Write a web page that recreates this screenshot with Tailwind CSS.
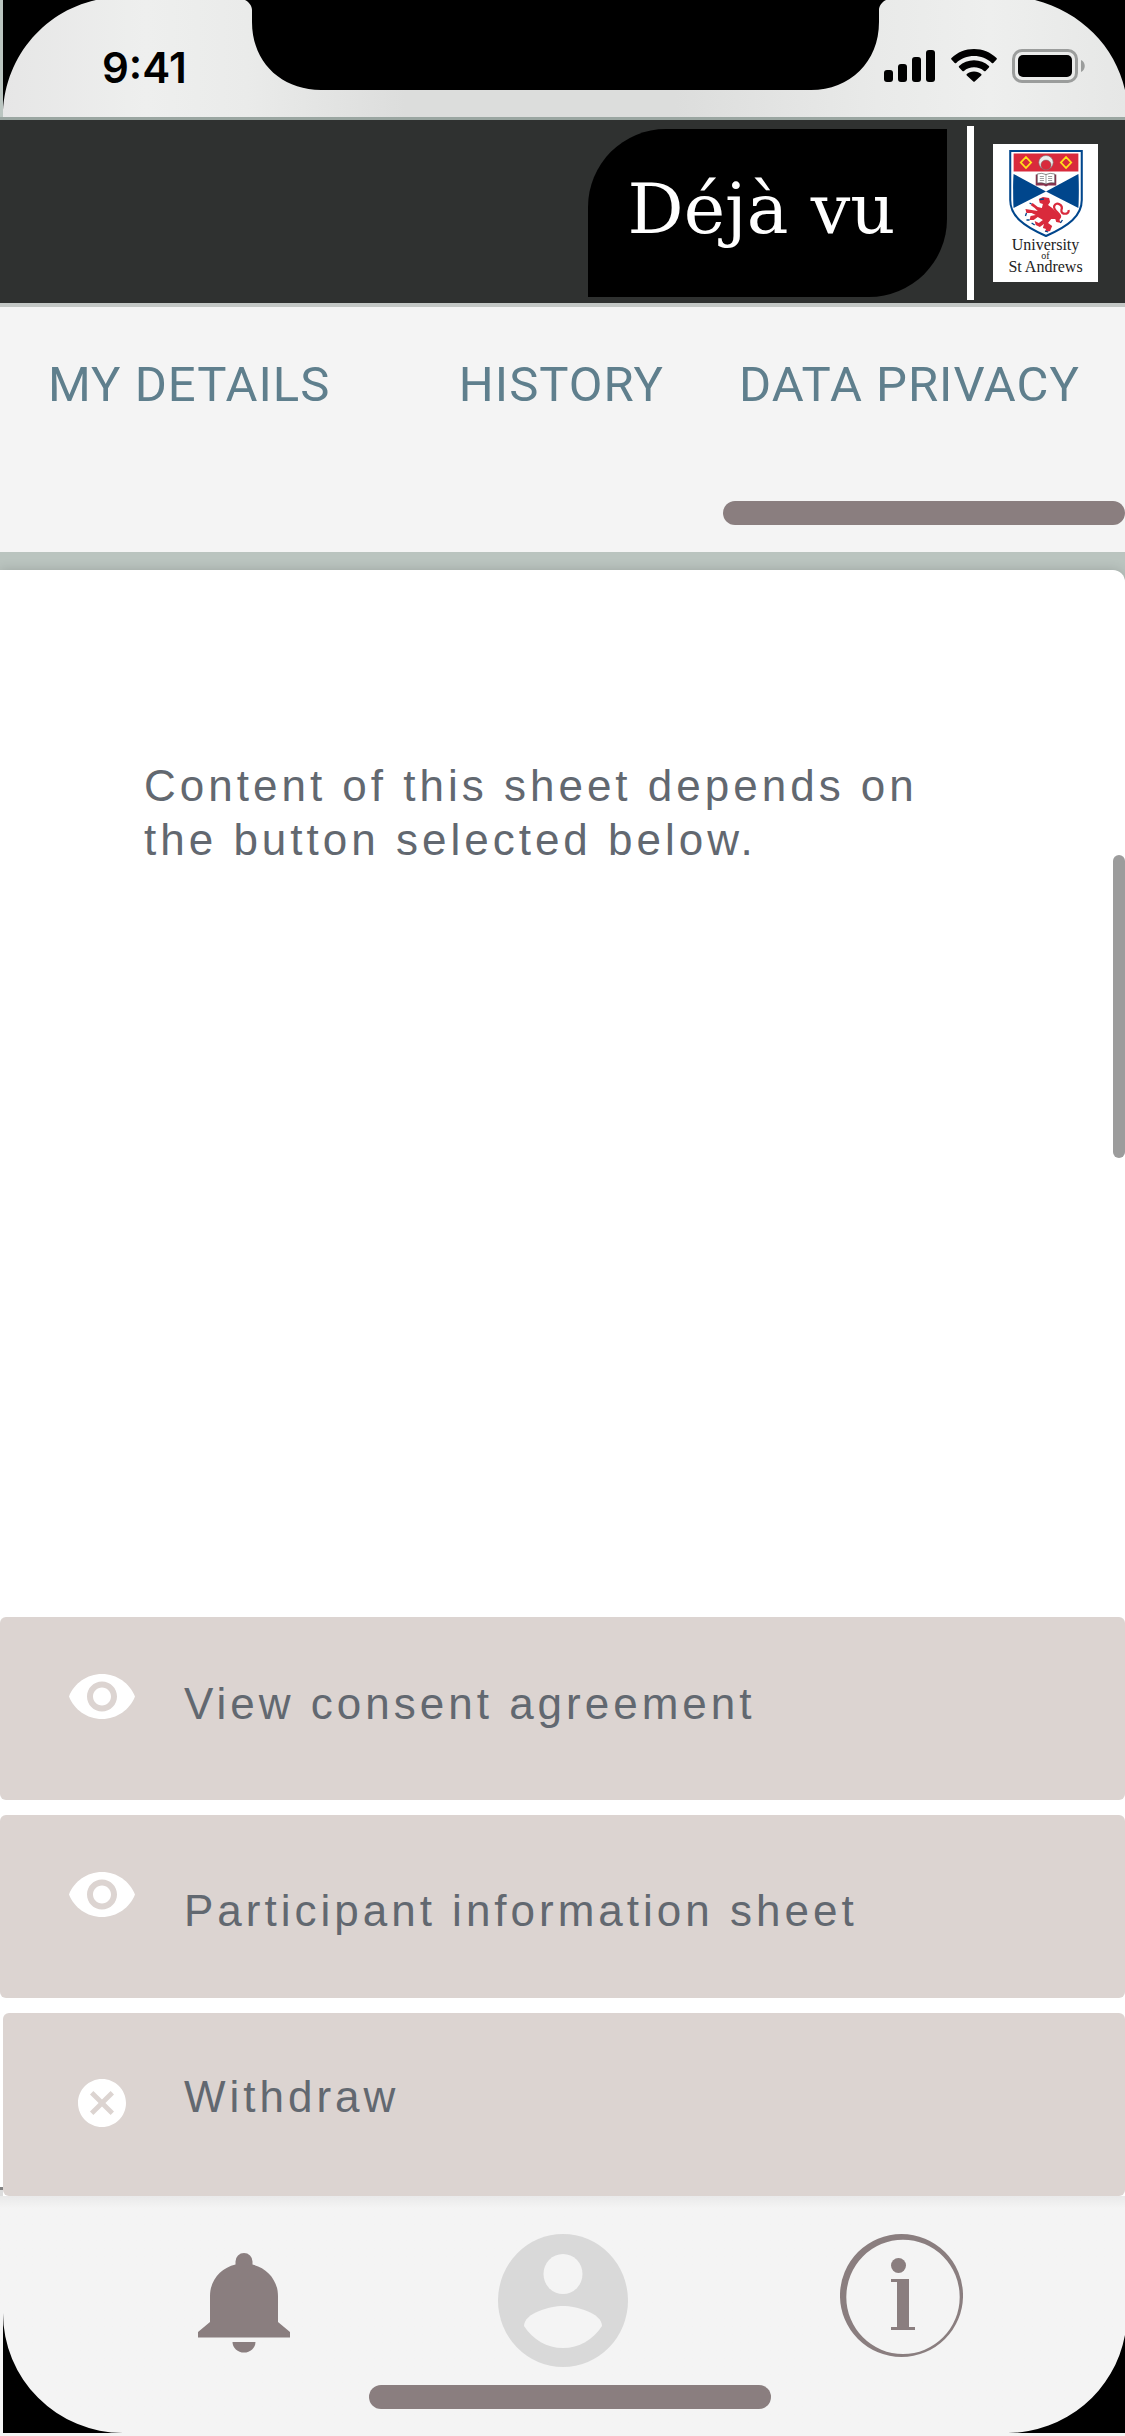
<!DOCTYPE html>
<html lang="en">
<head>
<meta charset="utf-8">
<meta name="viewport" content="width=device-width, initial-scale=1">
<title>Déjà vu – Data privacy</title>
<script src="https://cdn.jsdelivr.net/npm/@tailwindcss/browser@4"></script>
</head>
<body class="relative flex min-h-screen flex-col bg-[#f4f4f4] font-['Liberation_Sans',sans-serif]">

  <!-- Status bar with notch -->
  <div class="relative flex h-[120px] shrink-0 items-start justify-between overflow-hidden border-b-3 border-[#9aa6a1] bg-[linear-gradient(to_right,#e6e6e6_0%,#eeefee_13%,#eaebea_22%,#dcdddc_36%,#dcdddc_60%,#e9eae9_78%,#eeefee_88%,#e6e7e6_100%)]">
    <svg class="absolute top-0 left-0" width="123" height="117" viewBox="0 0 123 117" aria-hidden="true"><path d="M3 0H96C42 12 3 60 3 117z"/><path d="M0 0h3v117H0z" fill="#bac5c0"/></svg>
    <svg class="absolute top-0 right-0" width="90" height="90" viewBox="0 0 90 90" aria-hidden="true"><path d="M0 0H90V90C80 46 46 12 0 0z"/></svg>
    <svg class="absolute top-0 left-[245px]" width="641" height="90" viewBox="0 0 641 90" aria-hidden="true"><path d="M0 0C4 2 7 6 7 10V22C7 62 36 90 76 90H566C605 90 634 62 634 22V10C634 6 637 2 641 0z"/></svg>
    <time class="relative mt-[42px] ml-[102px] font-['Inter',sans-serif] text-[42px] leading-[52px] font-semibold text-black">9:41</time>
    <div class="relative mt-[49px] mr-[39px] flex gap-[15px]">
      <svg width="52" height="34" viewBox="0 0 52 34" role="img" aria-label="Signal"><rect y="21" width="9" height="12" rx="3"/><rect x="14" y="15" width="9" height="18" rx="3"/><rect x="28" y="8" width="9" height="25" rx="3"/><rect x="42" y="1" width="9" height="32" rx="3"/></svg>
      <svg width="46" height="34" viewBox="0 0 46 34" role="img" aria-label="Wi-Fi"><path d="M23 0C31.500 0 39.500 3.200 45.500 9Q46.200 9.700 45.500 10.500L42.300 13.900Q41.500 14.600 40.800 13.900C36 9.400 29.700 7 23 7S10 9.400 5.200 13.900Q4.500 14.600 3.700 13.900L.5 10.500Q-.2 9.700 .5 9C6.500 3.200 14.500 0 23 0z"/><path d="M23 11.200C28.700 11.200 34 13.300 37.900 17Q38.700 17.800 37.900 18.600L34.600 21.900Q33.800 22.600 33 21.900C30.300 19.500 26.800 18.200 23 18.200S15.700 19.500 13 21.900Q12.200 22.600 11.400 21.900L8.100 18.600Q7.300 17.800 8.100 17C12 13.300 17.300 11.200 23 11.200z"/><path d="M23 22.500C26 22.500 28.500 23.500 30.200 25Q31 25.700 30.200 26.500L23.700 32.500Q23 33.100 22.300 32.500L15.800 26.500Q15 25.700 15.800 25C17.500 23.500 20 22.500 23 22.500z"/></svg>
      <svg width="74" height="34" viewBox="0 0 74 34" role="img" aria-label="Battery"><rect x="1.500" y="1.500" width="63" height="31" rx="8.500" fill="none" stroke="#9b9d9c" stroke-width="3"/><rect x="6" y="6" width="54" height="22" rx="5"/><path d="M69 11C74 13 74 21 69 23z" fill="#9b9d9c"/></svg>
    </div>
  </div>

  <!-- Brand bar -->
  <header class="flex h-[187px] shrink-0 items-start justify-end border-b-4 border-[#c3c7c5] bg-[#2f3130] pr-[27px]">
    <div class="mt-[9px] flex h-[168px] w-[359px] items-center justify-center rounded-tl-[78px] rounded-br-[78px] bg-black pr-3 pb-2 font-['DejaVu_Serif',serif] text-[70px] leading-[80px] text-white">Déjà vu</div>
    <div class="mt-[6px] ml-5 h-[174px] w-[7px] bg-white"></div>
    <div class="mt-6 ml-[19px] flex h-[138px] w-[105px] flex-col items-center bg-white pt-[6px] font-['Liberation_Serif',serif] text-[#222]">
      <svg class="shrink-0" width="74" height="87" viewBox="0 0 72 87" preserveAspectRatio="none" aria-hidden="true">
        <path d="M1.200 1H70.800V50C70.800 66 58 76 36 86C14 76 1.200 66 1.200 50z" fill="#fff" stroke="#00468c" stroke-width="2"/>
        <path d="M4.500 3.500H67.500V21.500H4.500z" fill="#d92a3c"/>
        <path d="M4.500 24L36 41.500L4.500 58C4 54 3.800 30 4.500 24zM67.500 24L36 41.500L67.500 58C68 54 68.200 30 67.500 24z" fill="#00468c"/>
        <path d="M16.500 7L21.500 12.500L16.500 18L11.500 12.500zM55.500 7L60.500 12.500L55.500 18L50.500 12.500z" fill="none" stroke="#ffe11a" stroke-width="1.800"/>
        <circle cx="36" cy="12.500" r="7" fill="#eee" stroke="#777" stroke-width=".6"/>
        <circle cx="36" cy="15" r="5" fill="#d92a3c" stroke="#777" stroke-width=".5"/>
        <path d="M26 24.500H46V35.500H38L36 36.500L34 35.500H26z" fill="#8c3450"/>
        <path d="M27.500 24Q32 22.500 36 24.500Q40 22.500 44.500 24V33Q40 32 36 34Q32 32 27.500 33z" fill="#fff" stroke="#444" stroke-width=".6"/>
        <path d="M30 26.500h4M30 28.500h4M30 30.500h4M38 26.500h4M38 28.500h4M38 30.500h4M36 24.500V34" stroke="#777" stroke-width=".7"/>
        <path d="M29 49L33 47L39 48L40 52L38 55L42 58L46 62L50 66L49 70L51 73L46 72L45 69L41 69L38 73L42 76L40 81L35 82L36 79L33 78L34 74L30 77L26 75L25 71L29 73L33 70L28 67L24 70L20 70L21 66L26 65L22 63L17 63L16 59L22 60L28 61L25 58L21 55L23 53L28 57L32 58L33 54L30 53z" fill="#d92a3c"/>
        <path d="M48 69C54 65 42 61 44 56C46 51 53 55 51 60C50 65 59 65 58 60" fill="none" stroke="#d92a3c" stroke-width="2.200"/>
        <path d="M30 49.500L34 49M17 63L16 66M20 70L17 70M25 75L22 73M35 81L38 82M50 73L52 70M22 54L20 53" stroke="#00468c" stroke-width="1.300"/>
      </svg>
      <span class="text-base leading-4">University</span>
      <span class="text-[10px] leading-[6px]">of</span>
      <span class="text-base leading-4">St Andrews</span>
    </div>
  </header>

  <!-- Tabs -->
  <div role="tablist" class="flex h-[245px] shrink-0 font-['Roboto',sans-serif] text-[49px] leading-[56px] tracking-[1px] whitespace-nowrap text-[#5f7f8d]">
    <button role="tab" aria-selected="false" class="flex flex-1 items-start pt-[50px] pl-12">MY DETAILS</button>
    <button role="tab" aria-selected="false" class="flex flex-1 items-start justify-end pt-[50px] pr-[59px]">HISTORY</button>
    <button role="tab" aria-selected="true" class="flex w-[402px] flex-col items-start justify-between pt-[50px] pb-[27px]">
      <span class="pl-4">DATA PRIVACY</span>
      <span class="h-6 w-full rounded-full bg-[#8a7e7f]"></span>
    </button>
  </div>

  <!-- Sheet -->
  <main class="flex flex-1 flex-col bg-[#bac4bf] pt-[18px]">
    <div class="relative flex flex-1 flex-col rounded-tr-xl bg-white pt-[189px] text-[44px] leading-[54px] tracking-[4px] text-[#626870] shadow-[0_0_12px_rgba(0,0,0,0.16)]">
      <p class="mr-[180px] ml-36">Content of this sheet depends on<br>the button selected below.</p>
      <div class="absolute top-[285px] right-0 h-[303px] w-3 rounded-full bg-[#9c9c9c]"></div>
      <div class="absolute bottom-0 left-0 h-[9px] w-[3px] border-t-3 border-[#828282] bg-[#dddddd]"></div>

      <div class="mt-auto flex flex-col gap-[15px]">
        <button class="flex h-[183px] items-start rounded-md bg-[#dcd4d1] pl-[69px]">
          <svg class="mt-[57px] mr-[49px] shrink-0" width="66" height="45" viewBox="1 4.500 22 15" fill="#fff" aria-hidden="true"><path d="M12 4.500C7 4.500 2.730 7.610 1 12c1.730 4.390 6 7.500 11 7.500s9.270-3.110 11-7.500c-1.730-4.390-6-7.500-11-7.500zM12 17c-2.760 0-5-2.240-5-5s2.240-5 5-5 5 2.240 5 5-2.240 5-5 5zm0-8c-1.660 0-3 1.340-3 3s1.340 3 3 3 3-1.340 3-3-1.340-3-3-3z"/></svg>
          <span class="pt-[60px]">View consent agreement</span>
        </button>
        <button class="flex h-[183px] items-start rounded-md bg-[#dcd4d1] pl-[69px]">
          <svg class="mt-[57px] mr-[49px] shrink-0" width="66" height="45" viewBox="1 4.500 22 15" fill="#fff" aria-hidden="true"><path d="M12 4.500C7 4.500 2.730 7.610 1 12c1.730 4.390 6 7.500 11 7.500s9.270-3.110 11-7.500c-1.730-4.390-6-7.500-11-7.500zM12 17c-2.760 0-5-2.240-5-5s2.240-5 5-5 5 2.240 5 5-2.240 5-5 5zm0-8c-1.660 0-3 1.340-3 3s1.340 3 3 3 3-1.340 3-3-1.340-3-3-3z"/></svg>
          <span class="pt-[69px]">Participant information sheet</span>
        </button>
        <button class="ml-[3px] flex h-[183px] items-start rounded-md bg-[#dcd4d1] pl-[75px]">
          <svg class="mt-[66px] mr-[58px] shrink-0" width="48" height="48" viewBox="2 2 20 20" fill="#fff" aria-hidden="true"><path d="M12 2C6.470 2 2 6.470 2 12s4.470 10 10 10 10-4.470 10-10S17.530 2 12 2zm5 13.590L15.590 17 12 13.410 8.410 17 7 15.590 10.590 12 7 8.410 8.410 7 12 10.590 15.590 7 17 8.410 13.410 12 17 15.590z"/></svg>
          <span class="pt-[57px]">Withdraw</span>
        </button>
      </div>
    </div>
  </main>

  <!-- Bottom navigation -->
  <nav class="relative flex h-[240px] shrink-0 flex-col items-center bg-linear-to-b from-[#e9e9e9] via-[#f4f4f4] via-5% to-[#f4f4f4]">
    <svg class="absolute bottom-[3px] left-[3px]" width="120" height="120" viewBox="0 0 120 120" aria-hidden="true"><path d="M0 0A120 120 0 0 0 120 120H0z"/></svg>
    <svg class="absolute right-0 bottom-[3px]" width="117" height="98" viewBox="0 0 117 98" aria-hidden="true"><path d="M117 0A120 120 0 0 1 0 98H117z"/></svg>
    <div class="grid h-[189px] w-full grid-cols-[1fr_130px_1fr] items-start pt-[38px]">
      <a href="#notifications" aria-label="Notifications" class="justify-self-start pt-[19px] pl-[198px]">
        <svg width="92" height="100" viewBox="0 0 92 100" fill="#8a7e7f" aria-hidden="true"><path d="M46 0A8.500 8.500 0 0 1 54.500 8.500V11.500C69 15 80 27 80 43V69L92 79V84.500H0V79L12 69V43C12 27 23 15 37.500 11.500V8.500A8.500 8.500 0 0 1 46 0zM34.500 89h23a11.500 10.500 0 0 1 -23 0z"/></svg>
      </a>
      <a href="#profile" aria-label="Profile">
        <svg width="130" height="133" viewBox="0 0 130 133" aria-hidden="true"><ellipse cx="65" cy="66.500" rx="65" ry="66.500" fill="#d9d9d9"/><ellipse cx="65" cy="40" rx="19.500" ry="20" fill="#f4f4f4"/><path d="M26 92C26 79 52 72 65 72S104 79 104 92C95 106 81 114 65 114S35 106 26 92z" fill="#f4f4f4"/></svg>
      </a>
      <a href="#info" aria-label="Information" class="justify-self-end pr-[162px]">
        <svg width="123" height="123" viewBox="0 0 123 123" fill="#8a7e7f" aria-hidden="true"><path fill-rule="evenodd" d="M61.500 0A61.500 61.500 0 1 1 61.500 123A61.500 61.500 0 1 1 61.500 0zM63 5.700A56.700 57.200 0 1 0 63 120.100A56.700 57.200 0 1 0 63 5.700z"/><circle cx="58.500" cy="31.500" r="7.500"/><path d="M51 45H69V93H75V96H51V93H57V48H51z"/></svg>
      </a>
    </div>
    <div class="ml-[15px] h-6 w-[402px] rounded-full bg-[#8a7e7f]"></div>
  </nav>
</body>
</html>
